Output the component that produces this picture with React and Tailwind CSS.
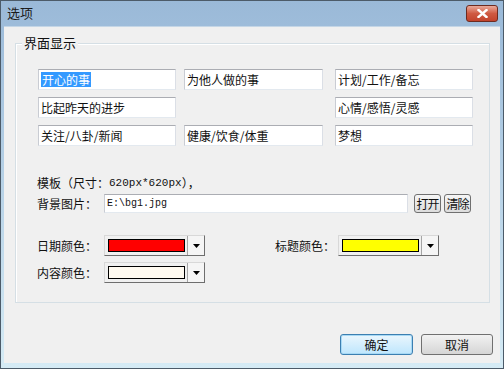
const font = { fontFamily: '"Noto Sans CJK SC", "Liberation Sans", sans-serif' }

function Field({ children, className = '', selected = false }) {
  return (
    <div
      className={`h-[21px] bg-white border border-t-[#abadb3] border-l-[#c9ccd3] border-b-[#e3e9ef] border-r-[#dbdfe6] flex items-center pl-[2px] text-[12px] leading-none text-[#111] ${className}`}
    >
      {selected ? <span className="bg-[#3399ff] text-white px-[1px] leading-[15px]">{children}</span> : children}
    </div>
  )
}

function ColorCombo({ color }) {
  return (
    <div className="w-[101px] h-[21px] flex items-center bg-[#f0f0f0] border border-t-[#d8d8d8] border-l-[#d8d8d8] border-b-[#6e6e6e] border-r-[#6e6e6e]">
      <div className="ml-[3px] w-[77px] h-[13px] border border-black" style={{ background: color }} />
      <div className="ml-auto h-full w-[17px] flex items-center justify-center border-l border-l-[#a5a5a5] bg-[#f5f5f5]">
        <svg width="7" height="4" viewBox="0 0 7 4">
          <polygon points="0,0 7,0 3.5,4" fill="#000" />
        </svg>
      </div>
    </div>
  )
}

function SmallButton({ children }) {
  return (
    <div className="w-[27px] h-[19px] flex items-center justify-center text-[12px] leading-none border border-[#707070] rounded-[3px] bg-gradient-to-b from-[#f6f6f6] to-[#dcdcdc] tracking-[-1px]">
      {children}
    </div>
  )
}

export default function App() {
  return (
    <div className="w-[504px] h-[369px] flex flex-col border border-[#4c5b69] bg-gradient-to-b from-[#9ab9d8] to-[#d5ebf5] text-[#111]" style={font}>
      {/* Title bar */}
      <div className="h-[25px] flex items-start shrink-0">
        <span className="ml-[6px] mt-[4px] text-[13px] leading-[16px] text-[#1b1b1b]">选项</span>
        <div className="ml-auto mr-[5px] mt-[4px] w-[32px] h-[17px] rounded-[3px] border border-[#6d2b20] bg-gradient-to-b from-[#e9a99a] via-[#cf5a42] to-[#c2432c] flex items-center justify-center">
          <svg width="11" height="9" viewBox="0 0 11 9">
            <path d="M1.5 1 L9.5 8 M9.5 1 L1.5 8" stroke="#fff" strokeWidth="2.4" strokeLinecap="square" />
          </svg>
        </div>
      </div>

      {/* Body */}
      <div className="flex-1 mx-[3px] mb-[5px] bg-[#f0f0f0] flex flex-col border-t border-[#c4d6e6]">
        {/* Group box */}
        <div className="relative mt-[16px] ml-[11px] w-[475px] h-[260px] border border-[#d5dfe5] shadow-[inset_1px_1px_0_#ffffff]">
          <span className="absolute -top-[9px] left-[6px] px-[2px] bg-[#f0f0f0] text-[13px] leading-[16px]">界面显示</span>

          <div className="pt-[25px] pl-[22px] flex flex-col">
            <div className="flex flex-col gap-[7px]">
              <div className="flex">
                <Field className="w-[138px]" selected>开心的事</Field>
                <Field className="w-[139px] ml-[8px]">为他人做的事</Field>
                <Field className="w-[138px] ml-[12px]">计划/工作/备忘</Field>
              </div>
              <div className="flex">
                <Field className="w-[138px]">比起昨天的进步</Field>
                <div className="w-[139px] ml-[8px]" />
                <Field className="w-[138px] ml-[12px]">心情/感悟/灵感</Field>
              </div>
              <div className="flex">
                <Field className="w-[138px]">关注/八卦/新闻</Field>
                <Field className="w-[139px] ml-[8px]">健康/饮食/体重</Field>
                <Field className="w-[138px] ml-[12px]">梦想</Field>
              </div>
            </div>

            <div className="mt-[29px] -ml-[1px] h-[16px] flex items-center text-[12px] leading-none">
              模板（尺寸：<span className="font-['Liberation_Mono'] text-[11px]">620px*620px</span>），
            </div>

            <div className="mt-[3px] -ml-[1px] flex items-center">
              <span className="w-[67px] text-[12px] leading-none">背景图片：</span>
              <div className="w-[304px] h-[19px] bg-white border border-t-[#abadb3] border-l-[#c9ccd3] border-b-[#e3e9ef] border-r-[#dbdfe6] flex items-center pl-[2px] font-['Liberation_Mono'] text-[10px] leading-none">
                E:\bg1.jpg
              </div>
              <div className="ml-[6px]"><SmallButton>打开</SmallButton></div>
              <div className="ml-[3px]"><SmallButton>清除</SmallButton></div>
            </div>

            <div className="mt-[22px] -ml-[1px] flex items-center">
              <span className="w-[67px] text-[12px] leading-none">日期颜色：</span>
              <ColorCombo color="#ff0000" />
              <span className="ml-[70px] w-[63px] text-[12px] leading-none">标题颜色：</span>
              <ColorCombo color="#ffff00" />
            </div>

            <div className="mt-[6px] -ml-[1px] flex items-center">
              <span className="w-[67px] text-[12px] leading-none">内容颜色：</span>
              <ColorCombo color="#fffaf0" />
            </div>
          </div>
        </div>

        {/* Dialog buttons */}
        <div className="mt-[31px] pr-[7px] flex justify-end gap-[8px]">
          <div className="w-[73px] h-[21px] rounded-[3px] border border-[#3c7fb1] bg-gradient-to-b from-[#eaf6fd] to-[#bee6fd] shadow-[inset_0_0_0_1px_#a7d9f5] flex items-center justify-center text-[12px] leading-none">
            确定
          </div>
          <div className="w-[72px] h-[21px] rounded-[3px] border border-[#707070] bg-gradient-to-b from-[#f2f2f2] to-[#d5d5d5] flex items-center justify-center text-[12px] leading-none">
            取消
          </div>
        </div>
      </div>
    </div>
  )
}
